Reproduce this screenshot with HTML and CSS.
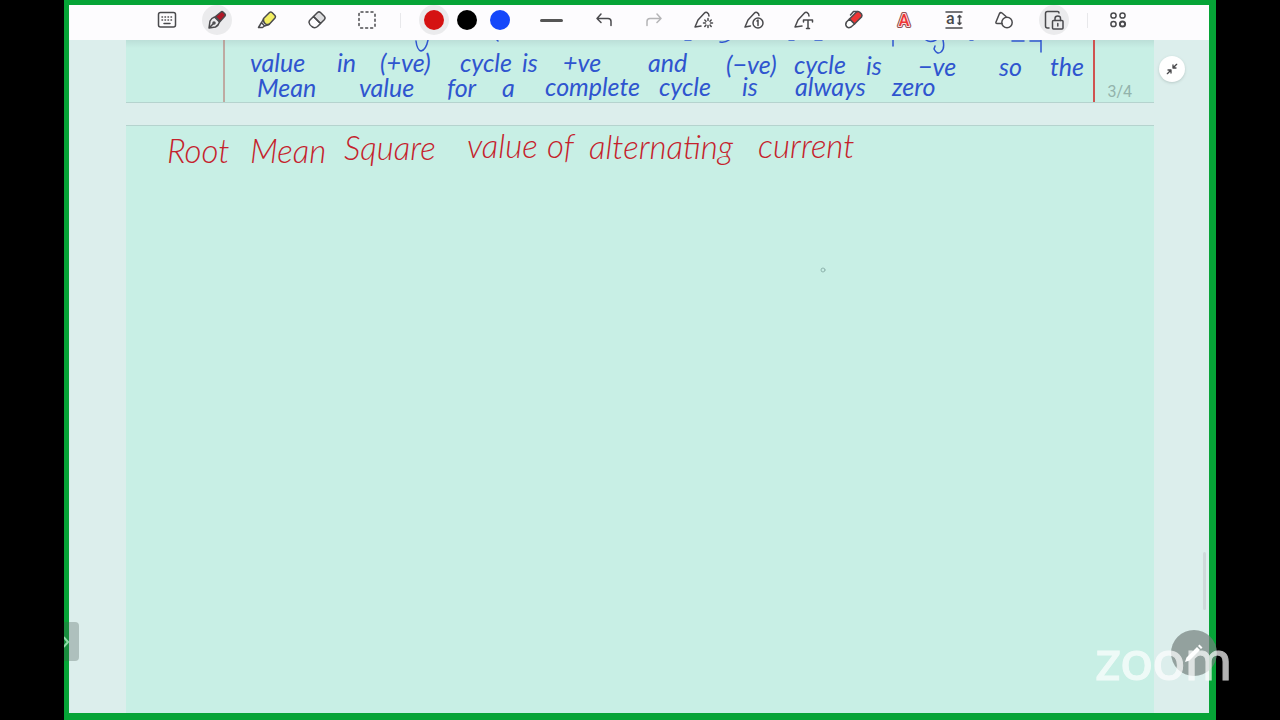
FILE: index.html
```html
<!DOCTYPE html>
<html lang="en">
<head>
    <meta charset="UTF-8" />
    <meta name="viewport" content="width=device-width, initial-scale=1.0" />
    <title>Notes</title>
    <link rel="stylesheet" href="styles.css">
</head>
<body>
    <main class="screen">
        <header class="toolbar">
            <div class="group">
                <button type="button" aria-label="Keyboard">
                    <svg viewBox="0 0 24 24"><rect x="3.5" y="4.5" width="17" height="14.5" rx="2"/><path d="M7 9h.5M10 9h.5M13 9h.5M16 9h.5M7 12h.5M10 12h.5M13 12h.5M16 12h.5M9 15.5h6"/></svg>
                </button>
                <button type="button" class="active" aria-label="Pen">
                    <svg viewBox="0 0 24 24"><path d="M4 20l1-7q1.500-3 4.500-4l5 5q-1 3.500-4 5zM4 20l4-4"/><circle cx="9" cy="15" r="1"/><path class="dark-red" d="M10.500 8.500l5.500-4.500q1-.8 2 0l2 2q.8 1 0 2l-5 5.500z"/></svg>
                </button>
                <button type="button" aria-label="Highlighter">
                    <svg viewBox="0 0 24 24"><path class="yellow" d="M8.500 10.500l6-6q1.200-1 2.500 0l3 3q1 1.300 0 2.500l-5.500 6q-2.500 1.500-4.500-.5t-1.500-5z"/><path d="M8.500 11l-2 3.500 3 3.500 4.500-1.500M6.500 14.500L3.500 19.500h4l2-1.500"/></svg>
                </button>
                <button type="button" aria-label="Eraser">
                    <svg viewBox="0 0 24 24"><path class="grey" d="M8.500 8.500l4-4q1.500-1.300 3 0l4 4q1.300 1.500 0 3l-4 4z"/><path d="M8.500 8.500l7 7-3 3q-2.500 2-5 .5-3-1.500-3.500-4.500 0-1.500 1-2.500z"/></svg>
                </button>
                <button type="button" aria-label="Select area">
                    <svg viewBox="0 0 24 24"><rect class="dashed" x="4" y="4" width="16" height="16" rx="2"/></svg>
                </button>
            </div>
            <span class="divider"></span>
            <div class="group colors">
                <button type="button" class="active" aria-label="Red"><span class="dot red-dot"></span></button>
                <button type="button" aria-label="Black"><span class="dot black-dot"></span></button>
                <button type="button" aria-label="Blue"><span class="dot blue-dot"></span></button>
            </div>
            <div class="group">
                <button type="button" class="thickness" aria-label="Line thickness"><span class="stroke"></span></button>
                <button type="button" aria-label="Undo">
                    <svg viewBox="0 0 24 24"><path d="M9 6l-4 4.500 4 4M5 10.500h11q3 0 3 3v4"/></svg>
                </button>
                <button type="button" class="disabled" aria-label="Redo">
                    <svg viewBox="0 0 24 24"><path d="M15 6l4 4.500-4 4M19 10.500H8q-3 0-3 3v4"/></svg>
                </button>
                <button type="button" aria-label="Smart pen">
                    <svg viewBox="0 0 24 24"><path d="M9 18l-6 1 3-7 6.500-7q1-1 2.500-.5 2 1 2 3.500"/><path d="M16 10.500v2M16 17.500v2M11.500 15h2M18.500 15h2M12.800 12l1.200 1.200M19.200 12l-1.200 1.200M12.800 18.500l1.200-1.500M19.200 18.500l-1.200-1.500"/></svg>
                </button>
                <button type="button" aria-label="Timed pen">
                    <svg viewBox="0 0 24 24"><path d="M8.500 18l-5.500 1 3-7 6.500-7q1-1 2.500-.5 2 1 2 3"/><circle cx="16" cy="15" r="5"/><path d="M15 13l1-1v5.500"/></svg>
                </button>
                <button type="button" aria-label="Pen to text">
                    <svg viewBox="0 0 24 24"><path d="M10 18l-7 1 3-7 6.500-7q1-1 2.500-.5 2 1 2 3.500"/><path d="M11.500 14v-2h9v2M16 12v8.500M14.500 20.500h3"/></svg>
                </button>
                <button type="button" aria-label="Marker">
                    <svg viewBox="0 0 24 24"><path class="bright-red" d="M7.500 11l7-7q1.500-1 3 0l2 2q1 1.500 0 3l-7 7z"/><path class="white" d="M7.500 11L4.500 14q-1.500 2.500 0 4.500t4.500 0.500l3.500-3z"/><path d="M8.500 7l3-3.500h4"/></svg>
                </button>
                <button type="button" aria-label="Text style">
                    <svg viewBox="0 0 24 24"><text class="letter outline" x="12" y="18" text-anchor="middle">A</text><text class="letter red-letter" x="12" y="18" text-anchor="middle">A</text></svg>
                </button>
                <button type="button" aria-label="Text size">
                    <svg viewBox="0 0 24 24"><path d="M4 4h16M4 20h16M17.500 7.500v9M16 9l1.500-1.500L19 9M16 15l1.500 1.500L19 15"/><text class="small-letter" x="4" y="16">a</text></svg>
                </button>
                <button type="button" aria-label="Shapes">
                    <svg viewBox="0 0 24 24"><path d="M10 15.500H5q-1.500 0-1-1.500L7.500 5.500q1-1.500 2.500-.5l4 3.500"/><circle cx="15" cy="14.500" r="5.200"/></svg>
                </button>
                <button type="button" class="active" aria-label="Lock page">
                    <svg viewBox="0 0 24 24"><path d="M7 20H5.500q-2 0-2-2V5.500q0-2 2-2H15.500q1.500 0 1.500 1.500"/><rect x="10.500" y="12.500" width="10.500" height="8.500" rx="1"/><path d="M13 12.500v-2q0-2.500 2.800-2.500t2.700 2.500v2M15.800 15.500v2.500"/></svg>
                </button>
            </div>
            <span class="divider"></span>
            <div class="group">
                <button type="button" class="more" aria-label="More tools">
                    <svg viewBox="0 0 24 24"><circle cx="7.500" cy="7.500" r="2.600"/><circle cx="16.500" cy="7.500" r="2.600"/><circle cx="7.500" cy="16" r="2.600"/><circle class="thick" cx="16.500" cy="16" r="2.600"/></svg>
                </button>
            </div>
        </header>

        <section class="pages">
            <article class="sheet sheet-end">
                <svg class="ink blue" viewBox="126 40 1028 62">
                    <path d="M416 41q1 9 5 10 5-1 7-11M497 40l1 1M685 40h6M720 42q5 1 9-2M789 40h5M815 40h7M893 40v6M926 40q4 3 10 0M943 40q2 9-2 12-4 3-7-3l1-3M970 40h3M1012 41h12M1030 41h10M1041 40v12"/>
                    <line class="margin" x1="224" y1="40" x2="224" y2="102"/>
                    <line class="margin wide" x1="1094" y1="40" x2="1094" y2="102"/>
                    <g>
                        <text x="250" y="72">value</text>
                        <text x="337" y="72">in</text>
                        <text x="380" y="72">(+ve)</text>
                        <text x="460" y="72">cycle</text>
                        <text x="522" y="72">is</text>
                        <text x="563" y="72">+ve</text>
                        <text x="648" y="72">and</text>
                        <text x="726" y="74">(−ve)</text>
                        <text x="794" y="74">cycle</text>
                        <text x="866" y="75">is</text>
                        <text x="918" y="76">−ve</text>
                        <text x="999" y="76">so</text>
                        <text x="1050" y="76">the</text>
                    </g>
                    <g>
                        <text x="257" y="97">Mean</text>
                        <text x="359" y="97">value</text>
                        <text x="447" y="97">for</text>
                        <text x="502" y="97">a</text>
                        <text x="545" y="96">complete</text>
                        <text x="659" y="96">cycle</text>
                        <text x="742" y="96">is</text>
                        <text x="795" y="96">always</text>
                        <text x="892" y="96">zero</text>
                    </g>
                </svg>
                <span class="page-number">3/4</span>
            </article>
            <article class="sheet sheet-next">
                <svg class="ink red" viewBox="126 126 1028 170">
                    <text x="167" y="163">Root</text>
                    <text x="250" y="163">Mean</text>
                    <text x="344" y="160">Square</text>
                    <text x="467" y="158">value</text>
                    <text x="547" y="158">of</text>
                    <text x="589" y="159">alternating</text>
                    <text x="758" y="158">current</text>
                    <circle class="cursor" cx="823" cy="270" r="2"/>
                </svg>
            </article>
        </section>

        <button type="button" class="collapse" aria-label="Exit full screen">
            <svg viewBox="0 0 24 24"><path d="M19 5l-5.500 5.500M13.500 6v4.500H18M5 19l5.500-5.500M6 13.500h4.500V18"/></svg>
        </button>
        <span class="scroll-thumb"></span>
    </main>

    <button type="button" class="side-handle" aria-label="Open panel">
        <svg viewBox="0 0 8 16"><path d="M0 3.500l4 4.500-4 4.500"/></svg>
    </button>
    <button type="button" class="edit" aria-label="Edit">
        <svg viewBox="0 0 24 24"><path d="M3 21l1.500-4.500L15 6l3 3L7.500 19.500zM16 5l1.500-1.500 3 3L19 8z"/></svg>
    </button>
    <span class="watermark">zoom</span>
</body>
</html>
```

FILE: styles.css
```css
* {
    box-sizing: border-box;
}

body {
    margin: 0;
    height: 100vh;
    padding: 0 5%;
    position: relative;
    overflow: hidden;
    background-color: #000;
    font-family: Roboto, "Liberation Sans", sans-serif;
}

button {
    display: flex;
    align-items: center;
    justify-content: center;
    padding: 0;
    border: none;
    background: none;
    cursor: pointer;
}

svg {
    fill: none;
    stroke: #4a4a4d;
    stroke-linecap: round;
    stroke-linejoin: round;
}

.screen {
    position: relative;
    display: flex;
    flex-direction: column;
    height: 100%;
    border: solid #06a437;
    border-width: 5px 7px 7px 5px;
    background-color: #dceeec;
    overflow: hidden;
}

/* Toolbar */
.toolbar {
    display: flex;
    flex: none;
    align-items: center;
    justify-content: center;
    gap: 18px;
    height: 35px;
    padding: 0 0 5px 4px;
    background-color: #fdfcfe;
}

.group {
    display: flex;
    align-items: center;
    gap: 20px;
}

.group.colors {
    gap: 3px;
}

.group button {
    width: 30px;
    height: 30px;
    border-radius: 50%;
}

.group button.thickness {
    width: 36px;
}

.group button.more {
    width: 24px;
}

.group button.active {
    background-color: #ebebed;
}

.group svg {
    width: 24px;
    height: 24px;
    stroke-width: 1.5;
}

.disabled {
    opacity: 0.4;
}

.divider {
    width: 1px;
    height: 15px;
    background-color: #e8e8eb;
}

.dot {
    width: 20px;
    height: 20px;
    border-radius: 50%;
}

.red-dot {
    background-color: #d51212;
}

.black-dot {
    background-color: #000;
}

.blue-dot {
    background-color: #1447fa;
}

.stroke {
    width: 23px;
    height: 3px;
    border-radius: 2px;
    background-color: #555;
}

.dark-red {
    fill: #b01626;
}

.bright-red {
    fill: #ee3434;
}

.yellow {
    fill: #f3ef62;
}

.grey {
    fill: #dcdcde;
}

.white {
    fill: #fff;
}

.dashed {
    stroke-dasharray: 2 3;
}

.thick {
    stroke-width: 2;
}

.letter,
.small-letter {
    font-family: Roboto, sans-serif;
    font-weight: 500;
    font-size: 16px;
    fill: #4a4a4d;
    stroke: none;
}

.outline {
    stroke: #8a5054;
    stroke-width: 4;
}

.red-letter {
    fill: #ee3434;
    stroke: #fbdcdc;
    stroke-width: 2;
    paint-order: stroke;
}

/* Pages */
.pages {
    display: flex;
    flex: 1;
    flex-direction: column;
    gap: 22px;
    padding: 0 55px 0 57px;
    min-height: 0;
}

.sheet {
    position: relative;
    background-color: #c8efe5;
}

.sheet-end {
    border-bottom: 1px solid #b5d3ce;
    background-image: linear-gradient(#bcdfd8, #c8efe5 8px);
}

.sheet-next {
    flex: 1;
    border-top: 1px solid #b5d3ce;
}

.ink {
    display: block;
    width: 100%;
    font-family: Lato, sans-serif;
    font-style: italic;
}

.ink text {
    stroke: none;
}

.blue {
    font-size: 25px;
    fill: #2f55cf;
    stroke: #2f55cf;
}

.blue path {
    fill: none;
    stroke-width: 1.5;
}

.red {
    font-size: 33px;
    font-weight: 300;
    fill: #c5222c;
}

.ink .margin {
    stroke: #b4645f;
    stroke-width: 1px;
}

.ink .wide {
    stroke: #cf5350;
    stroke-width: 2px;
}

.cursor {
    fill: none;
    stroke: #8fb5ae;
    stroke-width: 1px;
}

.page-number {
    position: absolute;
    right: 22px;
    bottom: 1px;
    font-size: 16px;
    color: #93b3ac;
}

/* Floating controls */
.collapse {
    position: absolute;
    top: 51px;
    right: 24px;
    width: 26px;
    height: 26px;
    border-radius: 50%;
    background-color: #fff;
    box-shadow: 0 1px 3px #b8cac8;
}

.collapse svg {
    width: 16px;
    height: 16px;
    stroke-width: 2px;
}

.scroll-thumb {
    position: absolute;
    right: 3px;
    bottom: 103px;
    width: 3px;
    height: 58px;
    border-radius: 2px;
    background-color: #ced9da;
}

.side-handle {
    position: absolute;
    left: 5%;
    bottom: 59px;
    width: 15px;
    height: 39px;
    justify-content: flex-start;
    border-radius: 0 4px 4px 0;
    background-color: rgba(70, 85, 80, 0.3);
}

.side-handle svg {
    width: 8px;
    height: 16px;
    stroke: #8fdda8;
    stroke-width: 2px;
}

.edit {
    position: absolute;
    right: 63px;
    bottom: 44px;
    width: 46px;
    height: 46px;
    border-radius: 50%;
    background-color: rgba(115, 128, 125, 0.7);
}

.edit svg {
    width: 24px;
    height: 24px;
    fill: #fff;
    stroke: none;
}

.watermark {
    position: absolute;
    right: 48px;
    bottom: 33px;
    font-family: Lato, sans-serif;
    font-size: 57px;
    line-height: 58px;
    color: #fff;
    -webkit-text-stroke: 1px #fff;
    opacity: 0.7;
    pointer-events: none;
}
```
